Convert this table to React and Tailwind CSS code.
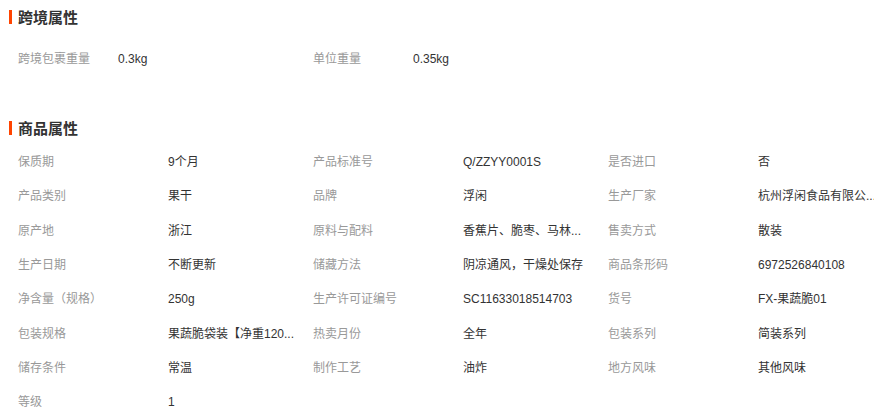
import React from "react";

const font = { fontFamily: '"Liberation Sans", "Noto Sans CJK SC", sans-serif' };

const cross = [
  ["跨境包裹重量", "0.3kg"],
  ["单位重量", "0.35kg"],
];

const attrs = [
  ["保质期", "9个月"],
  ["产品标准号", "Q/ZZYY0001S"],
  ["是否进口", "否"],
  ["产品类别", "果干"],
  ["品牌", "浮闲"],
  ["生产厂家", "杭州浮闲食品有限公..."],
  ["原产地", "浙江"],
  ["原料与配料", "香蕉片、脆枣、马林..."],
  ["售卖方式", "散装"],
  ["生产日期", "不断更新"],
  ["储藏方法", "阴凉通风，干燥处保存"],
  ["商品条形码", "6972526840108"],
  ["净含量（规格）", "250g"],
  ["生产许可证编号", "SC11633018514703"],
  ["货号", "FX-果蔬脆01"],
  ["包装规格", "果蔬脆袋装【净重120..."],
  ["热卖月份", "全年"],
  ["包装系列", "简装系列"],
  ["储存条件", "常温"],
  ["制作工艺", "油炸"],
  ["地方风味", "其他风味"],
  ["等级", "1"],
];

function Title({ children }) {
  return (
    <div className="flex h-[34px] items-center pl-[9px]">
      <span className="mr-[6px] h-[14px] w-[3px] bg-[#ff4400]" />
      <span className="text-[15px] font-bold leading-none text-[#333]">{children}</span>
    </div>
  );
}

export default function App() {
  return (
    <div className="w-[874px] h-[412px] overflow-hidden bg-white" style={font}>
      <Title>跨境属性</Title>
      <div className="mt-[8px] grid grid-cols-[295px_295px_266px] pl-[18px]">
        {cross.map(([k, v]) => (
          <div key={k} className="flex h-[34px] items-center text-[12px]">
            <span className="w-[100px] shrink-0 text-[#999]">{k}</span>
            <span className="text-[#333]">{v}</span>
          </div>
        ))}
      </div>
      <div className="mt-[35px]">
        <Title>商品属性</Title>
        <div className="grid grid-cols-[295px_295px_266px] pl-[18px]">
          {attrs.map(([k, v]) => (
            <div key={k} className="flex h-[34.3px] min-w-0 items-center text-[12px]">
              <span className="w-[150px] shrink-0 text-[#999]">{k}</span>
              <span className="whitespace-nowrap text-[#333]">{v}</span>
            </div>
          ))}
        </div>
      </div>
    </div>
  );
}
